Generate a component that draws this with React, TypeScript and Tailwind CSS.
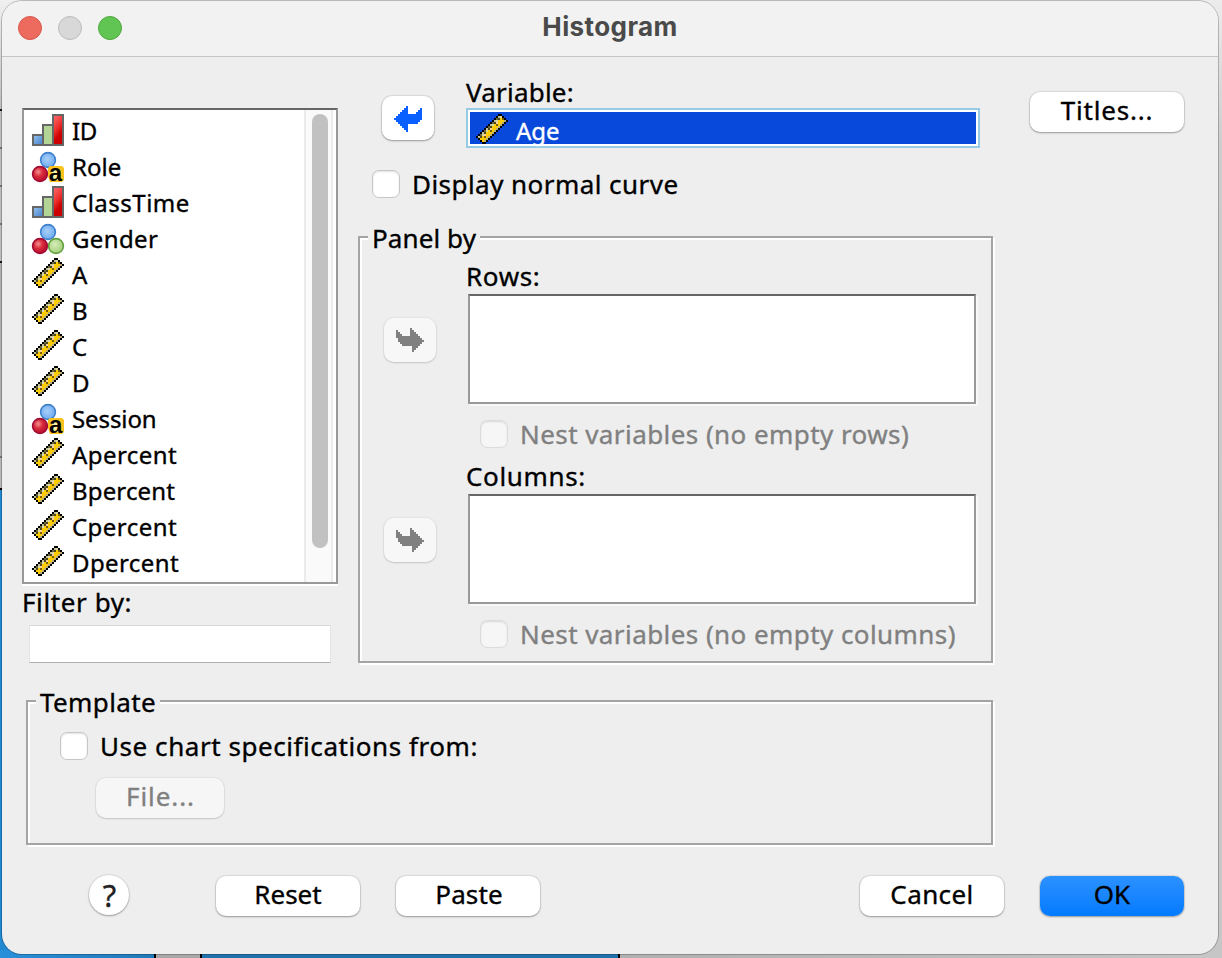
import type { ReactNode } from "react";

type Kind = "scale" | "ordinal" | "nominal" | "string";

const LEFT_ARROW: [number, number, number][] = [
  [0, 6, 6], [1, 5, 6], [1, 13, 13], [2, 4, 6], [2, 12, 13], [3, 3, 6], [3, 11, 13],
  [4, 2, 13], [5, 1, 13], [6, 0, 13], [7, 1, 12], [8, 2, 11], [9, 3, 6], [10, 4, 6],
  [11, 5, 6], [12, 6, 6],
];

const RIGHT_ARROW: [number, number, number][] = [
  [0, 7, 7], [1, 0, 0], [1, 7, 8], [2, 0, 1], [2, 7, 9], [3, 0, 2], [3, 7, 10],
  [4, 0, 11], [5, 1, 12], [6, 1, 13], [7, 2, 12], [8, 3, 11], [9, 8, 10], [10, 8, 9],
  [11, 8, 8],
];

function PixelArrow({ spans, rows, className }: { spans: [number, number, number][]; rows: number; className: string }) {
  return (
    <svg width="28" height={rows * 2} viewBox={`0 0 14 ${rows}`} shapeRendering="crispEdges" className={className}>
      {spans.map(([y, a, b]) => (
        <rect key={`${y}-${a}`} x={a} y={y} width={b - a + 1} height="1" fill="currentColor" />
      ))}
    </svg>
  );
}

function rulerColor(x: number, y: number): string | null {
  const d = x + y;
  const e = x - y;
  if (d < 11 || d > 18 || e < -11 || e > 12 || y > 14) return null;
  if (d === 11 || d === 18 || e <= -11 || e >= 12 || y === 14) return "#000000";
  if (d === 12) return Math.abs(e) % 4 === 0 ? "#6a6738" : "#c2c296";
  if (d === 17) return "#b5ae7c";
  if (d === 13) return Math.abs(e) % 4 === 1 ? "#4a4720" : "#d8d8a8";
  if (d === 15 && (e + 13) % 6 === 0) return "#7a5e00";
  if (d === 14 && (e + 12) % 6 === 0) return "#ffd09c";
  return "#ffcc00";
}

function Ruler() {
  const cells: ReactNode[] = [];
  for (let y = 0; y < 16; y++) {
    for (let x = 0; x < 16; x++) {
      const c = rulerColor(x, y);
      if (c) cells.push(<rect key={`${x}-${y}`} x={x} y={y} width="1" height="1" fill={c} />);
    }
  }
  return (
    <svg width="32" height="32" viewBox="0 0 16 16" shapeRendering="crispEdges" className="shrink-0">
      {cells}
    </svg>
  );
}

function Bars() {
  return (
    <svg width="32" height="32" viewBox="0 0 32 32" className="shrink-0">
      <defs>
        <linearGradient id="barBlue" x1="0" y1="0" x2="1" y2="1">
          <stop offset="0" stopColor="#9cc4f0" />
          <stop offset="1" stopColor="#3f7fc8" />
        </linearGradient>
        <linearGradient id="barRed" x1="0" y1="0" x2="0.4" y2="1">
          <stop offset="0" stopColor="#ff7070" />
          <stop offset="0.5" stopColor="#ee3030" />
          <stop offset="0.8" stopColor="#cc0000" />
        </linearGradient>
      </defs>
      <rect x="1" y="21" width="10" height="10" fill="url(#barBlue)" stroke="#666" strokeWidth="2" />
      <rect x="11" y="11" width="10" height="20" fill="#b2d494" stroke="#666" strokeWidth="2" />
      <rect x="21" y="1" width="10" height="30" fill="url(#barRed)" stroke="#666" strokeWidth="2" />
    </svg>
  );
}

function Balls({ letter }: { letter?: boolean }) {
  return (
    <svg width="32" height="32" viewBox="0 0 32 32" className="shrink-0 overflow-visible">
      <defs>
        <radialGradient id="ballBlue" cx="0.45" cy="0.45" r="0.6">
          <stop offset="0" stopColor="#a8cffa" />
          <stop offset="1" stopColor="#6ba8ee" />
        </radialGradient>
        <radialGradient id="ballRed" cx="0.38" cy="0.36" r="0.6">
          <stop offset="0" stopColor="#f49090" />
          <stop offset="0.5" stopColor="#d82c3c" />
          <stop offset="1" stopColor="#bc1030" />
        </radialGradient>
        <radialGradient id="ballGreen" cx="0.42" cy="0.4" r="0.6">
          <stop offset="0" stopColor="#d4ecb8" />
          <stop offset="1" stopColor="#a4d07c" />
        </radialGradient>
      </defs>
      <circle cx="16" cy="10" r="7.4" fill="url(#ballBlue)" stroke="#3f80cc" strokeWidth="1.6" />
      <circle cx="8" cy="24" r="7.4" fill="url(#ballRed)" stroke="#a00c34" strokeWidth="1.6" />
      {letter ? (
        <>
          <path d="M18 16h12l2 2v12l-2 2H18l-2-6v-8z" fill="#fcc320" />
          <path d="M20 20h8v10h-8z" fill="#fdf3a0" />
          <text x="23.5" y="31" textAnchor="middle" className="font-['Liberation_Sans',sans-serif] text-[24px] font-bold [-webkit-text-stroke:0px]" fill="#000">
            a
          </text>
        </>
      ) : (
        <circle cx="24" cy="24" r="7.4" fill="url(#ballGreen)" stroke="#62a040" strokeWidth="1.6" />
      )}
    </svg>
  );
}

function VarIcon({ kind }: { kind: Kind }) {
  if (kind === "scale") return <Ruler />;
  if (kind === "ordinal") return <Bars />;
  return <Balls letter={kind === "string"} />;
}

const VARIABLES: { name: string; kind: Kind; tracking: string }[] = [
  { name: "ID", kind: "ordinal", tracking: "-tracking-[0.5px]" },
  { name: "Role", kind: "string", tracking: "tracking-[0px]" },
  { name: "ClassTime", kind: "ordinal", tracking: "tracking-[0.5px]" },
  { name: "Gender", kind: "nominal", tracking: "tracking-[0.35px]" },
  { name: "A", kind: "scale", tracking: "" },
  { name: "B", kind: "scale", tracking: "" },
  { name: "C", kind: "scale", tracking: "" },
  { name: "D", kind: "scale", tracking: "" },
  { name: "Session", kind: "string", tracking: "-tracking-[0.1px]" },
  { name: "Apercent", kind: "scale", tracking: "tracking-[0.45px]" },
  { name: "Bpercent", kind: "scale", tracking: "tracking-[0.15px]" },
  { name: "Cpercent", kind: "scale", tracking: "tracking-[0.45px]" },
  { name: "Dpercent", kind: "scale", tracking: "tracking-[0.4px]" },
];

function Checkbox({ label, disabled = false, className }: { label: string; disabled?: boolean; className: string }) {
  return (
    <label className={`flex h-7 items-center whitespace-nowrap ${disabled ? "text-[#808080]" : "text-black"} ${className}`}>
      <span
        className={`mr-3 size-7 shrink-0 rounded-[7px] border shadow-[inset_0_1px_2px_rgba(0,0,0,0.12)] ${
          disabled ? "border-[#dcdcdc] bg-[#f6f6f6]" : "border-[#c6c6c6] bg-white"
        }`}
      />
      {label}
    </label>
  );
}

function Button({ children, className }: { children: ReactNode; className: string }) {
  return (
    <button
      className={`flex h-10 shrink-0 items-center justify-center rounded-[10px] pb-[5px] whitespace-nowrap shadow-[0_0_1px_1px_rgba(0,0,0,0.08),0_1px_2px_rgba(0,0,0,0.3)] ${className}`}
    >
      {children}
    </button>
  );
}

function MoveButton() {
  return (
    <button className="mx-6 flex h-11 w-[52px] shrink-0 items-center justify-center rounded-[10px] bg-[#f7f7f7] shadow-[0_0_1px_1px_rgba(0,0,0,0.04),0_1px_2px_rgba(0,0,0,0.14)]">
      <PixelArrow spans={RIGHT_ARROW} rows={12} className="text-[#808080]" />
    </button>
  );
}

function Group({ title, className, children }: { title: string; className: string; children: ReactNode }) {
  return (
    <section className={`border-2 border-[#a4a4a4] shadow-[inset_2px_2px_0_#fff,2px_2px_0_#fff] ${className}`}>
      <h2 className="-mt-[14px] ml-2 flex h-7 w-fit items-center bg-[#eeeeee] px-1 leading-7">{title}</h2>
      {children}
    </section>
  );
}

function PanelList({ label, nest }: { label: string; nest: string }) {
  return (
    <div className="flex h-[200px]">
      <div className="flex h-[174px] items-center pt-0.5">
        <MoveButton />
      </div>
      <div className="flex w-[508px] flex-col pt-[7px]">
        <div className="ml-[6px] flex h-[35px] items-center pb-0.5 tracking-[0.65px]">{label}</div>
        <div className="ml-2 h-[110px] w-[508px] border-2 border-t-[#666] border-x-[#999] border-b-[#999] bg-white shadow-[2px_2px_0_#f8f8f8]" />
        <Checkbox label={nest} disabled className="mt-4 ml-5 tracking-[0.43px]" />
      </div>
    </div>
  );
}

export default function App() {
  return (
    <div className="relative h-[958px] w-[1222px] overflow-hidden bg-linear-to-b from-[#ececec] via-[#cdcdcd] via-15% to-[#c6c6c6] font-['Noto_Sans',sans-serif] text-[26px] leading-none text-black [-webkit-text-stroke:0.35px_currentColor]">
      <div className="flex h-full w-[30px] flex-col">
        <div className="h-[109px] bg-linear-to-b from-[#f0f0f0] to-[#bdbdbd]" />
        <div className="h-0.5 bg-[#101820]" />
        <div className="h-[36px] bg-[#bdbdbd]" />
        <div className="h-0.5 bg-[#777]" />
        <div className="h-[36px] bg-[#bdbdbd]" />
        <div className="h-0.5 bg-[#777]" />
        <div className="h-[36px] bg-[#bdbdbd]" />
        <div className="h-0.5 bg-[#777]" />
        <div className="h-[36px] bg-[#bdbdbd]" />
        <div className="h-0.5 bg-[#101820]" />
        <div className="h-[193px] bg-[#b0b0b0]" />
        <div className="h-0.5 bg-[#777]" />
        <div className="h-[30px] bg-[#b8b8b8]" />
        <div className="h-0.5 bg-black" />
        <div className="grow bg-[#2188d2]" />
      </div>
      <div className="absolute bottom-0 left-0 flex h-2 w-full">
        <div className="w-[154px] bg-linear-to-r from-[#2a90da] to-[#2079b8]" />
        <div className="w-0.5 bg-black" />
        <div className="w-[44px] bg-[#a8a8a8]" />
        <div className="w-0.5 bg-black" />
        <div className="w-[416px] bg-[#1f72ae]" />
        <div className="w-0.5 bg-black" />
        <div className="grow bg-linear-to-r from-[#b0b0b0] to-[#c6c6c6]" />
      </div>

      <main className="absolute top-px left-0.5 flex h-[953px] w-[1216px] flex-col rounded-[20px] bg-[#eeeeee] shadow-[0_0_0_1px_rgba(0,0,0,0.22)]">
        <header className="grid h-[56px] shrink-0 grid-cols-[1fr_auto_1fr] items-center rounded-t-[20px] border-b border-[#c6c6c6] bg-[#f2f2f2] pb-px">
          <div className="flex gap-4 pl-4">
            <span className="size-6 rounded-full border border-[#d8574c] bg-[#ec6a5e]" />
            <span className="size-6 rounded-full border border-[#bcbcbc] bg-[#d8d8d8]" />
            <span className="size-6 rounded-full border border-[#4fa83d] bg-[#61c554]" />
          </div>
          <h1 className="pb-0.5 font-['Inter',sans-serif] text-[26px] font-bold tracking-[0.4px] text-[#4a4a4a] [-webkit-text-stroke:0px]">
            Histogram
          </h1>
          <div />
        </header>

        <div className="flex h-[643px] shrink-0">
          <aside className="ml-5 flex w-[316px] flex-col pt-[51px]">
            <div className="flex h-[476px] w-[316px] shrink-0 border-2 border-t-[#666] border-x-[#999] border-b-[#999] bg-white shadow-[0_2px_0_#fff]">
              <ul className="flex grow flex-col pt-[3px] pl-2 text-[24px]">
                {VARIABLES.map((v) => (
                  <li key={v.name} className={`flex h-9 items-center ${v.tracking}`}>
                    <span className="mr-2 -mt-0.5">
                      <VarIcon kind={v.kind} />
                    </span>
                    {v.name}
                  </li>
                ))}
              </ul>
              <div className="mr-[3px] flex w-[29px] justify-end border-x-2 border-x-[#ebebeb] bg-[#fafafa] pt-1 pr-[3px]">
                <div className="h-[434px] w-4 rounded-full bg-[#c1c1c1]" />
              </div>
            </div>
            <div className="mt-0.5 flex h-8 items-center tracking-[0.6px]">Filter by:</div>
            <input className="mt-[7px] ml-[7px] h-[38px] w-[302px] border border-t-[#d8d8d8] border-x-[#e4e4e4] border-b-[#b0b0b0] bg-white outline-none" />
          </aside>

          <div className="ml-5 flex w-[636px] flex-col pt-5">
            <div className="flex">
              <button className="mt-[19px] ml-6 flex h-11 w-[52px] shrink-0 items-center justify-center rounded-[10px] bg-white pt-0.5 shadow-[0_0_1px_1px_rgba(0,0,0,0.08),0_1px_2px_rgba(0,0,0,0.3)]">
                <PixelArrow spans={LEFT_ARROW} rows={13} className="text-[#0a60ff]" />
              </button>
              <div className="ml-8 flex w-[514px] flex-col">
                <div className="flex h-[31px] items-center pb-0.5 tracking-[0.2px]">Variable:</div>
                <div className="h-10 border-2 border-[#97cbe4] bg-white p-0.5">
                  <div className="flex h-8 items-center bg-[#0849dc] pl-[6px] text-[24px] text-white">
                    <span className="mr-2 pt-1">
                      <Ruler />
                    </span>
                    <span className="pt-[5px]">Age</span>
                  </div>
                </div>
              </div>
            </div>
            <Checkbox label="Display normal curve" className="mt-[22px] ml-[14px] tracking-[0.45px]" />
            <Group title="Panel by" className="mt-[38px] h-[427px] w-[635px] tracking-[0.1px]">
              <div className="flex flex-col">
                <PanelList label="Rows:" nest="Nest variables (no empty rows)" />
                <PanelList label="Columns:" nest="Nest variables (no empty columns)" />
              </div>
            </Group>
          </div>

          <Button className="mt-[35px] ml-[36px] w-[154px] bg-white tracking-[0.8px]">Titles...</Button>
        </div>

        <Group title="Template" className="ml-6 h-[145px] w-[967px] shrink-0 tracking-[0.4px]">
          <div className="flex flex-col">
            <Checkbox label="Use chart specifications from:" className="mt-[16px] ml-8 tracking-[0.56px]" />
            <button className="mt-[18px] ml-[68px] flex h-10 w-32 items-center justify-center rounded-[10px] bg-[#f6f6f6] pb-[5px] pl-px tracking-[0.9px] text-[#808080] shadow-[0_0_1px_1px_rgba(0,0,0,0.04),0_1px_2px_rgba(0,0,0,0.14)]">
              File...
            </button>
          </div>
        </Group>

        <footer className="mt-[31px] flex items-center">
          <Button className="-mt-0.5 mr-[87px] ml-[87px] w-10 rounded-full! bg-white pb-0! pl-px text-[31px] text-[#222]">?</Button>
          <Button className="mr-9 w-36 bg-white">Reset</Button>
          <Button className="mr-[320px] w-36 bg-white pl-0.5 tracking-[0.1px]">Paste</Button>
          <Button className="mr-9 w-36 bg-white tracking-[0.4px]">Cancel</Button>
          <Button className="w-36 bg-linear-to-b from-[#2a91ff] to-[#007aff]">OK</Button>
        </footer>
      </main>
    </div>
  );
}
